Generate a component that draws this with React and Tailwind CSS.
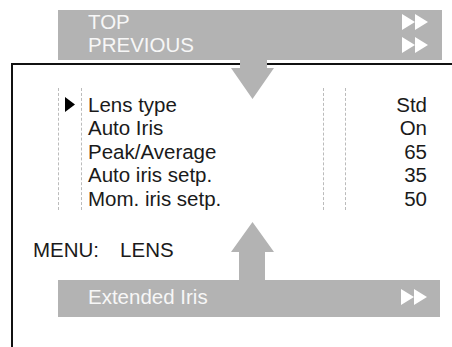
import React from "react";

function DoubleArrow() {
  return (
    <svg width="26" height="16" viewBox="0 0 26 16" className="shrink-0">
      <polygon points="0,0 13,8 0,16" fill="#ffffff" />
      <polygon points="13,0 26,8 13,16" fill="#ffffff" />
    </svg>
  );
}

const rows = [
  ["Lens type", "Std"],
  ["Auto Iris", "On"],
  ["Peak/Average", "65"],
  ["Auto iris setp.", "35"],
  ["Mom. iris setp.", "50"],
];

export default function App() {
  return (
    <div className="relative w-[452px] h-[347px] overflow-hidden bg-white flex flex-col font-['Liberation_Sans',Arial,sans-serif] text-[20.5px] text-[#1a1a1a]">
      {/* top gray box */}
      <div className="ml-[58px] mt-[10px] w-[384px] h-[50px] bg-[#b3b3b3] pl-[30px] pr-[14px] text-[#f7f7f7] flex flex-col">
        <div className="flex justify-between items-center h-[23px] leading-[23px]">
          <span>TOP</span>
          <DoubleArrow />
        </div>
        <div className="flex justify-between items-center h-[23px] leading-[23px]">
          <span>PREVIOUS</span>
          <DoubleArrow />
        </div>
      </div>

      {/* frame */}
      <div className="mt-[3px] ml-[11px] flex-1 border-l-2 border-t-2 border-[#111] pt-[23px]">
        <div className="ml-[45px] flex">
          <div className="w-[24px] border-x border-dashed border-[#bbbbbb] pt-[5px]">
            {rows.map((r, i) => (
              <div key={i} className="h-[23.4px] flex items-center justify-center">
                {i === 0 && (
                  <svg width="10" height="15" viewBox="0 0 10 15">
                    <polygon points="0,0 10,7.5 0,15" fill="#000" />
                  </svg>
                )}
              </div>
            ))}
          </div>
          <div className="w-[241px] pl-[6px] pt-[5px]">
            {rows.map((r, i) => (
              <div key={i} className="h-[23.4px] leading-[23.4px] whitespace-nowrap">
                {r[0]}
              </div>
            ))}
          </div>
          <div className="w-[23px] border-x border-dashed border-[#bbbbbb] pt-[5px]">
            {rows.map((r, i) => (
              <div key={i} className="h-[23.4px]" />
            ))}
          </div>
          <div className="w-[82px] pr-[1px] text-right pt-[5px]">
            {rows.map((r, i) => (
              <div key={i} className="h-[23.4px] leading-[23.4px]">
                {r[1]}
              </div>
            ))}
          </div>
        </div>

        <div className="ml-[20px] mt-[28px] leading-[23px] flex">
          <span>MENU:</span>
          <span className="ml-[21px]">LENS</span>
        </div>

        <div className="ml-[45px] mt-[19px] w-[382px] h-[37px] bg-[#b3b3b3] flex items-center justify-between pl-[30px] pr-[13px] pb-[3px] text-[#f7f7f7]">
          <span className="leading-[23px]">Extended Iris</span>
          <DoubleArrow />
        </div>
      </div>

      {/* down arrow */}
      <svg
        className="absolute left-[231px] top-[60px]"
        width="43"
        height="39"
        viewBox="0 0 43 39"
      >
        <polygon points="9,0 36,0 36,8 43,8 21.5,39 0,8 9,8" fill="#b3b3b3" />
      </svg>

      {/* up arrow */}
      <svg
        className="absolute left-[231px] top-[222px]"
        width="43"
        height="59"
        viewBox="0 0 43 59"
      >
        <polygon points="21.5,0 43,30 34,30 34,59 8,59 8,30 0,30" fill="#b3b3b3" />
      </svg>
    </div>
  );
}
